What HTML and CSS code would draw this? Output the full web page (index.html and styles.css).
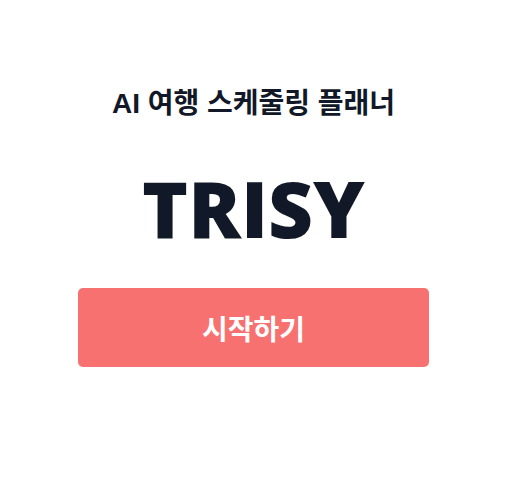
FILE: index.html
```html
<!DOCTYPE html>
<html lang="ko">
<head>
<meta charset="utf-8">
<link rel="stylesheet" href="styles.css">
</head>
<body>
<main class="page">
  <h2 class="subtitle">AI 여행 스케줄링 플래너</h2>
  <h1 class="logo">TRISY</h1>
  <button class="start">시작하기</button>
</main>
</body>
</html>
```
FILE: styles.css
```css
* { box-sizing: border-box; }
html, body { margin: 0; background: #fff; }
body { font-family: "Open Sans", "Noto Sans CJK KR", sans-serif; color: #111827; }
.page {
  width: 507px;
  height: 491px;
  display: flex;
  flex-direction: column;
  align-items: center;
  padding-top: 84px;
}
.subtitle {
  margin: 0;
  font-size: 28px;
  font-weight: 700;
  line-height: 40px;
  font-family: "Liberation Sans", "Noto Sans CJK KR", sans-serif;
}
.logo {
  margin: 45px 0 0;
  font-size: 78px;
  font-weight: 800;
  line-height: 78px;
}
.start {
  margin-top: 41px;
  width: 351px;
  height: 79px;
  border: 0;
  border-radius: 5px;
  background: #f87171;
  color: #fff;
  font-family: "Noto Sans CJK KR", sans-serif;
  font-size: 28px;
  font-weight: 700;
}
```
